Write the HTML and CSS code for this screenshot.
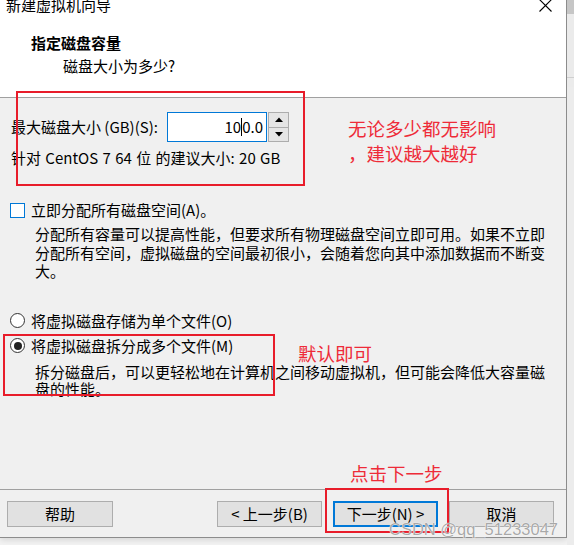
FILE: index.html
```html
<!DOCTYPE html>
<html lang="zh">
<head>
<meta charset="utf-8">
<title>新建虚拟机向导</title>
<link rel="stylesheet" href="styles.css">
</head>
<body>
<div class="screen">
  <div class="window">
    <div class="header">
      <div class="titlebar">
        <span class="title">新建虚拟机向导</span>
        <svg class="close" width="13" height="13" viewBox="0 0 13 13"><path d="M0.5 0.5 L12.5 12.5 M12.5 0.5 L0.5 12.5" stroke="#000" stroke-width="1.1" fill="none"/></svg>
      </div>
      <div class="heading">指定磁盘容量</div>
      <div class="subheading">磁盘大小为多少?</div>
    </div>

    <div class="content">
      <div class="size-row">
        <span class="size-label">最大磁盘大小 (GB)(S):</span>
        <div class="spin-input"><span>10</span><span class="caret"></span><span>0.0</span></div>
        <div class="spinner">
          <div class="spin-btn"><svg width="8" height="5" viewBox="0 0 8 5"><polygon points="0,5 4,0.5 8,5" fill="#000"/></svg></div>
          <div class="spin-btn"><svg width="8" height="5" viewBox="0 0 8 5"><polygon points="0,0 8,0 4,4.5" fill="#000"/></svg></div>
        </div>
      </div>
      <div class="suggest">针对 CentOS 7 64 位 的建议大小: 20 GB</div>

      <div class="option check-row">
        <span class="checkbox"></span>
        <span class="opt-label">立即分配所有磁盘空间(A)。</span>
      </div>
      <div class="desc desc-a">分配所有容量可以提高性能，但要求所有物理磁盘空间立即可用。如果不立即<br>分配所有空间，虚拟磁盘的空间最初很小，会随着您向其中添加数据而不断变<br>大。</div>

      <div class="option radio-one">
        <span class="radio"></span>
        <span class="opt-label">将虚拟磁盘存储为单个文件(O)</span>
      </div>
      <div class="option radio-two">
        <span class="radio checked"></span>
        <span class="opt-label">将虚拟磁盘拆分成多个文件(M)</span>
      </div>
      <div class="desc desc-b">拆分磁盘后，可以更轻松地在计算机之间移动虚拟机，但可能会降低大容量磁<br>盘的性能。</div>
    </div>

    <div class="footer">
      <button class="btn btn-help">帮助</button>
      <div class="nav">
        <button class="btn">&lt; 上一步(B)</button>
        <button class="btn btn-default">下一步(N) &gt;</button>
        <button class="btn">取消</button>
      </div>
    </div>
  </div>

  <div class="side">
    <div class="side-top"></div>
    <div class="side-mid"></div>
    <div class="side-rest"></div>
  </div>

  <div class="mark mark-size"></div>
  <div class="mark mark-radio"></div>
  <div class="mark mark-next"></div>
  <div class="note note-size">无论多少都无影响<br>，建议越大越好</div>
  <div class="note note-radio">默认即可</div>
  <div class="note note-next">点击下一步</div>
  <div class="watermark">CSDN @qq_51233047</div>
</div>
</body>
</html>
```

FILE: styles.css
```css
* { box-sizing: border-box; }

html, body {
  margin: 0;
  padding: 0;
  background: #f3f3f3;
}

body {
  font-family: "Noto Sans CJK SC", "Microsoft YaHei", sans-serif;
  color: #000;
  font-size: 15px;
}

.screen {
  position: relative;
  width: 574px;
  height: 545px;
  overflow: hidden;
  display: flex;
  align-items: flex-start;
}

.window {
  width: 567px;
  height: 538px;
  display: flex;
  flex-direction: column;
  border-right: 1px solid #8c8c8c;
  border-bottom: 1px solid #8c8c8c;
  background: #f0f0f0;
  box-shadow: 0 2px 6px rgba(0,0,0,0.12);
}

/* header */
.header {
  height: 98px;
  background: #fff;
  border-bottom: 1px solid #a0a0a0;
}

.titlebar {
  display: flex;
  justify-content: space-between;
  align-items: flex-start;
  height: 20px;
  margin-top: -5px;
  padding-left: 6px;
  padding-right: 14px;
}

.title {
  font-size: 15px;
  line-height: 20px;
}

.close {
  margin-top: 4px;
}

.heading {
  margin-top: 18px;
  padding-left: 31px;
  font-size: 15px;
  font-weight: bold;
  line-height: 20px;
}

.subheading {
  margin-top: 3px;
  padding-left: 63px;
  font-size: 15px;
  line-height: 20px;
}

/* content */
.content {
  flex: 1;
  padding-top: 14px;
}

.size-row {
  display: flex;
  align-items: center;
  height: 30px;
  padding-left: 11px;
}

.size-label {
  width: 156px;
  line-height: 20px;
}

.spin-input {
  width: 100px;
  height: 30px;
  border: 1px solid #0078d7;
  background: #fff;
  display: flex;
  justify-content: flex-end;
  align-items: center;
  padding-right: 3px;
  font-size: 15px;
  line-height: 20px;
}

.caret {
  display: inline-block;
  width: 1px;
  height: 18px;
  background: #000;
}

.spinner {
  margin-left: 1px;
  width: 21px;
  height: 30px;
  border: 1px solid #adadad;
  display: flex;
  flex-direction: column;
}

.spin-btn {
  flex: 1;
  background: #e5e5e5;
  display: flex;
  align-items: center;
  justify-content: center;
}

.spin-btn + .spin-btn {
  border-top: 1px solid #adadad;
}

.suggest {
  margin-top: 7px;
  padding-left: 11px;
  line-height: 18px;
  word-spacing: 1px;
}

.option {
  display: flex;
  align-items: center;
  height: 18px;
  padding-left: 10px;
}

.check-row { margin-top: 34px; }
.radio-one { margin-top: 31px; }
.radio-two { margin-top: 7px; }

.opt-label {
  margin-left: 6px;
  line-height: 18px;
}

.checkbox {
  width: 15px;
  height: 15px;
  border: 1px solid #0078d7;
  background: #fff;
}

.radio {
  width: 15px;
  height: 15px;
  border: 1px solid #333;
  border-radius: 50%;
  background: #fff;
  display: flex;
  align-items: center;
  justify-content: center;
}

.radio.checked::after {
  content: "";
  width: 8px;
  height: 8px;
  border-radius: 50%;
  background: #222;
}

.desc {
  padding-left: 35px;
  letter-spacing: 0;
  white-space: nowrap;
}

.desc-a {
  margin-top: 6px;
  line-height: 18.5px;
}

.desc-b {
  margin-top: 8px;
  line-height: 17.5px;
}

/* footer */
.footer {
  border-top: 1px solid #a0a0a0;
  padding: 11px 12px 10px 7px;
  display: flex;
  justify-content: space-between;
}

.nav {
  display: flex;
  gap: 11px;
}

.btn {
  width: 105px;
  height: 26px;
  background: #e1e1e1;
  border: 1px solid #adadad;
  font-family: "Noto Sans CJK SC", "Microsoft YaHei", sans-serif;
  font-size: 15px;
  line-height: 20px;
  color: #000;
  padding: 0;
}

.btn-help {
  width: 106px;
}

.btn-default {
  border: 2px solid #0078d7;
}

/* outside area */
.side {
  width: 7px;
  height: 545px;
  display: flex;
  flex-direction: column;
}

.side-top {
  height: 14px;
  background: #c6c6c6;
}

.side-mid {
  height: 64px;
  background: #ebebeb;
  border-bottom: 1px solid #cfcfcf;
}

.side-rest {
  flex: 1;
  background: #ececec;
  border-top: 9px solid #ebebeb;
}

/* annotations (overlay) */
.mark {
  position: absolute;
  border: 2px solid #e81c2a;
}

.mark-size {
  left: 16px;
  top: 91px;
  width: 289px;
  height: 95px;
}

.mark-radio {
  left: 3px;
  top: 334px;
  width: 272px;
  height: 62px;
}

.mark-next {
  left: 325px;
  top: 488px;
  width: 124px;
  height: 45px;
}

.note {
  position: absolute;
  color: #ee2b38;
  font-size: 18.5px;
  white-space: nowrap;
}

.note-size {
  left: 348px;
  top: 116px;
  line-height: 25px;
}

.note-radio {
  left: 298px;
  top: 341px;
  line-height: 24px;
}

.note-next {
  left: 350px;
  top: 461px;
  line-height: 24px;
}

.watermark {
  position: absolute;
  left: 389px;
  top: 518px;
  font-family: "Liberation Sans", Arial, sans-serif;
  font-size: 16.5px;
  line-height: 22px;
  color: rgba(140, 140, 140, 0.75);
  text-shadow: 0 0 1px #fff, 0 0 1px #fff;
  white-space: nowrap;
}
```
